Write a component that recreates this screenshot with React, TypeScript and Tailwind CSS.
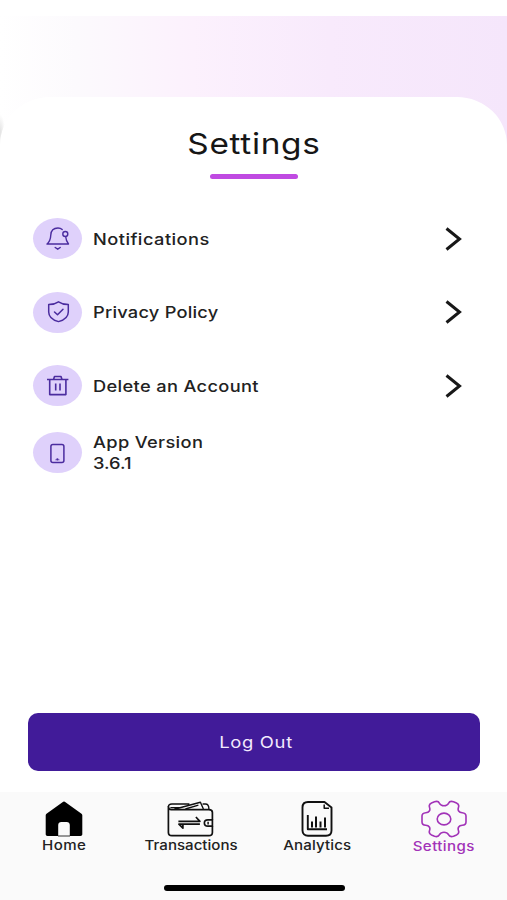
import React from "react";

const BellIcon = () => (
  <svg width="26" height="26" viewBox="0 0 26 26" fill="none" stroke="#4b2c9f" strokeWidth="1.400" strokeLinecap="round" strokeLinejoin="round">
    <path d="M17.2 3.500C16 2.400 14.800 2 13 2C8.500 2 6 5 5.800 9C5.600 13 5 15.500 2 18H23.500C21.800 16 21 14.500 20.700 10.800" />
    <circle cx="20.300" cy="8" r="2.500" />
    <path d="M10.200 21.500L12.700 23.200L15.200 21.500" />
  </svg>
);

const ShieldIcon = () => (
  <svg width="26" height="26" viewBox="1 0 26 26" fill="none" stroke="#4b2c9f" strokeWidth="1.500" strokeLinecap="round" strokeLinejoin="round">
    <path d="M14.500 2.800C11.500 4.800 8 5.600 4.700 5.600V13C4.700 18 8.500 21 14.500 22.600C20.500 21 24.300 18 24.300 13V5.600C21 5.600 17.500 4.800 14.500 2.800Z" />
    <path d="M10.500 13L13.500 15.800L19 10.200" />
  </svg>
);

const TrashIcon = () => (
  <svg width="26" height="26" viewBox="0.500 0 26 26" fill="none" stroke="#4b2c9f" strokeWidth="1.600" strokeLinejoin="round">
    <path d="M2.500 6.500H23.900M9 6.500L10 3.500H16.500L17.500 6.500M5.200 6.500V21.600H21.400V6.500M11.200 10.500V17.500M15.500 10.500V17.500" />
  </svg>
);

const PhoneIcon = () => (
  <svg width="26" height="26" viewBox="0.700 0 26 26" fill="none" stroke="#4b2c9f" strokeWidth="1.500">
    <rect x="6.600" y="4.500" width="13" height="18" rx="2" />
    <circle cx="13.100" cy="19.300" r="1.100" fill="#4b2c9f" stroke="none" />
    <path d="M11 19.800H15.200" strokeWidth="0.700" />
  </svg>
);

const HomeIcon = () => (
  <svg width="38" height="36" viewBox="0 0 38 36">
    <path d="M19 0.500C19.600 0.500 20 0.800 20.500 1.200L36.500 12.800C37 13.200 37.300 13.600 37.300 14.300V33.300C37.300 34.300 36.500 35 35.500 35H24.800V24C24.800 22.300 23.500 21 21.800 21H16.200C14.500 21 13.200 22.300 13.200 24V35H2.500C1.500 35 0.700 34.300 0.700 33.300V14.300C0.700 13.600 1 13.200 1.500 12.800L17.500 1.200C18 0.800 18.400 0.500 19 0.500Z" />
    <path d="M13 35H25" stroke="#000" strokeWidth="0.800" />
  </svg>
);

const WalletIcon = () => (
  <svg width="46" height="36" viewBox="0.600 0 46 36" fill="none" stroke="#111" strokeWidth="1.700" strokeLinejoin="round" overflow="visible">
    <path d="M45 18.500V11.500C45 9.700 43.600 8.600 41.500 8.600H4C2.300 8.600 1 7.500 1 5.700V31.500C1 33.600 2.600 34.700 4.500 34.700H41.500C43.600 34.700 45 33.600 45 31.500V25.500" />
    <path d="M1 6C1 4 2.500 3 4.500 3H22M3 6.600H13M7 8.300L33 1.200L36 8M31 4.200L18 8M35.200 3H38C40.500 3 41.500 4.500 41.500 8" strokeWidth="1.400" />
    <path d="M45.300 18.800H40.500C35.800 18.800 35.800 25.200 40.500 25.200H45.300M45 18V26" />
    <path d="M40.700 20.700V23.400" strokeWidth="1.500" />
    <path d="M11 20.300H32.500L28.500 16M32.500 23.200H11.500L15.500 27.200V24" strokeWidth="1.700" />
  </svg>
);

const AnalyticsIcon = () => (
  <svg width="32" height="36" viewBox="0 0 32 36" fill="none" stroke="#111" strokeWidth="1.900" strokeLinejoin="round">
    <path d="M7 1H23.500L30.500 6.500V29.500C30.500 32.800 28.300 34.800 25 34.800H7C3.700 34.800 1.500 32.800 1.500 29.500V6.500C1.500 3 3.700 1 7 1Z" />
    <path d="M23.200 3.500V7.200H28" strokeWidth="1.500" />
    <path d="M6.800 14V28.300H26" />
    <path d="M11 26.500V20.500M15 26.500V15.500M19.500 26.500V20.500M24 26.500V16.500" strokeWidth="2" />
  </svg>
);

const GearIcon = () => (
  <svg width="46" height="38" viewBox="0 0 46 38" fill="none" stroke="#a233b8" strokeWidth="1.600" strokeLinejoin="round">
    <path d="M18.500 3.300C17.500 1.200 15.800 1 13.500 1.800L10.500 3C8.300 4 7.800 5.200 8.500 7.200C9.600 10.300 8.200 12.500 4.800 12.700C2.200 12.900 1 14 1 16V22C1 24 2.200 25.100 4.800 25.300C8.200 25.500 9.600 27.700 8.500 30.800C7.800 32.800 8.300 34 10.500 35L13.500 36.200C15.800 37 17.500 36.800 18.500 34.700C20.300 31.500 25.700 31.500 27.500 34.700C28.500 36.800 30.200 37 32.500 36.200L35.500 35C37.700 34 38.200 32.800 37.500 30.800C36.400 27.700 37.800 25.500 41.200 25.300C43.800 25.100 45 24 45 22V16C45 14 43.800 12.900 41.200 12.700C37.800 12.500 36.400 10.300 37.500 7.200C38.200 5.200 37.700 4 35.500 3L32.500 1.800C30.200 1 28.500 1.200 27.500 3.300C25.700 6.500 20.300 6.500 18.500 3.300Z" />
    <ellipse cx="23" cy="19" rx="6.800" ry="5.900" />
  </svg>
);

const rows = [
  { label: "Notifications", icon: <BellIcon />, class: "tracking-[0.4px]" },
  { label: "Privacy Policy", icon: <ShieldIcon />, class: "tracking-[0.2px]" },
  { label: "Delete an Account", icon: <TrashIcon />, class: "tracking-[0.3px]" },
];

const tabs = [
  { label: "Home", icon: <HomeIcon />, class: "text-[#222222]", labelClass: "-mt-px tracking-[0.4px]" },
  { label: "Transactions", icon: <WalletIcon />, class: "text-[#222222]", labelClass: "-mt-px" },
  { label: "Analytics", icon: <AnalyticsIcon />, class: "text-[#222222]", labelClass: "-mt-px tracking-[0.1px]" },
  { label: "Settings", icon: <GearIcon />, class: "text-[#a233b8]", labelClass: "tracking-[0.35px]" },
];

const IconBadge = ({ children }: { children: React.ReactNode }) => (
  <span className="flex h-[41px] w-[49px] shrink-0 items-center justify-center rounded-[50%] bg-[#dfd1fb]">
    {children}
  </span>
);

const App: React.FC = () => {
  return (
    <div className="flex h-[900px] w-[507px] flex-col overflow-hidden bg-white pt-4 font-['Inter',sans-serif] text-[#222222]">
      <main className="flex flex-1 flex-col bg-[radial-gradient(ellipse_5px_18px_at_0_116px,#e2e2e2,transparent),linear-gradient(90deg,#ffffff_0%,#fcfafd_15%,#fcf1fd_38%,#f8eafc_65%,#f5e6fb_100%)] pt-[81px]">
        <div className="flex flex-1 flex-col rounded-t-[50px_48px] bg-white">
          <header className="flex flex-col items-center pt-[27px]">
            <h1 className="scale-x-[1.15] text-[29px] leading-10 tracking-[0.6px] text-[#161616]">Settings</h1>
            <div className="mt-[10px] h-[5px] w-[88px] rounded-full bg-[#c04ae2]" />
          </header>

          <ul className="mt-[39px] flex flex-col gap-[32.700px] pr-[45px] pl-[33px]">
            {rows.map((row) => (
              <li key={row.label} className="flex h-[41px] items-center">
                <IconBadge>{row.icon}</IconBadge>
                <span className={`ml-[11px] origin-left scale-x-[1.14] text-base font-medium ${row.class}`}>{row.label}</span>
                <svg className="ml-auto" width="17" height="24" viewBox="0 0 17 24" fill="none" stroke="#181818" strokeWidth="3">
                  <path d="M1.500 1.500L14.500 12L1.500 22.500" />
                </svg>
              </li>
            ))}
          </ul>
          <div className="mt-[25.600px] flex items-center pl-[33px]">
            <IconBadge>
              <PhoneIcon />
            </IconBadge>
            <div className="ml-[11px] origin-left scale-x-[1.14] text-base leading-[21px] font-medium">
              <p className="tracking-[0.3px]">App Version</p>
              <p className="tracking-[0px]">3.6.1</p>
            </div>
          </div>

          <button className="mr-[27px] ml-7 mt-auto mb-[21px] h-[58px] rounded-[10px] bg-[#411b99] text-base text-[#f3eafd]">
            <span className="ml-1 inline-block scale-x-[1.15] tracking-[0.6px]">Log Out</span>
          </button>
        </div>
      </main>

      <footer className="flex h-[108px] flex-col items-center bg-[#fafafa] pl-px">
        <nav className="grid w-full grid-cols-4 pt-2">
          {tabs.map((tab) => (
            <a key={tab.label} className={`flex flex-col items-center ${tab.class}`}>
              <span className="flex h-[38px] items-center">{tab.icon}</span>
              <span className={`scale-x-[1.16] text-[13px] leading-4 font-medium ${tab.labelClass}`}>{tab.label}</span>
            </a>
          ))}
        </nav>
        <div className="mt-auto mb-[9px] h-[6px] w-[181px] rounded-full bg-black" />
      </footer>
    </div>
  );
};

export default App;
